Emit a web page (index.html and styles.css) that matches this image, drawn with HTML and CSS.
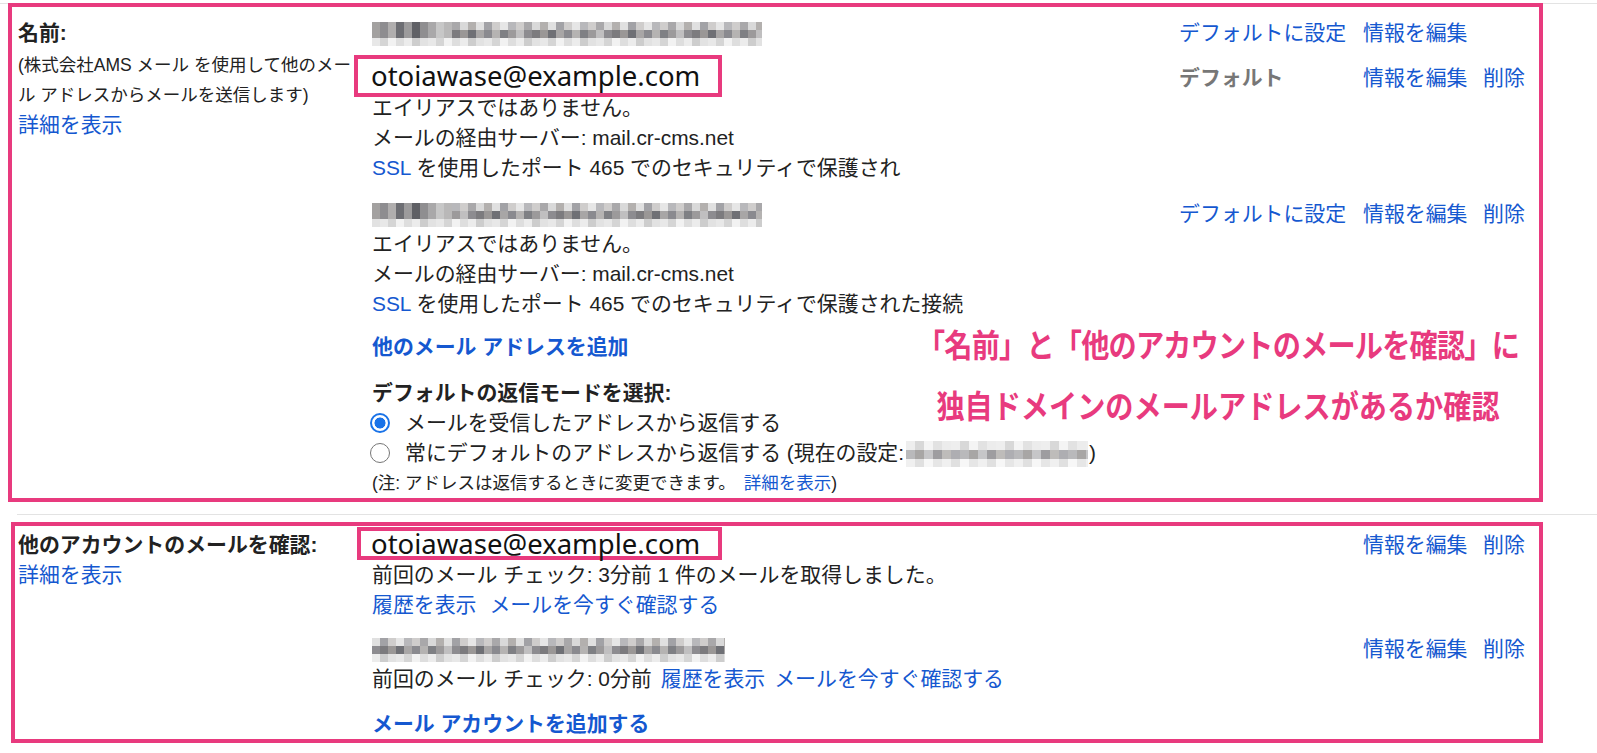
FILE: index.html
```html
<!DOCTYPE html>
<html lang="ja">
<head>
<meta charset="utf-8">
<title>アカウント設定</title>
<link rel="stylesheet" href="styles.css">
</head>
<body>
<div class="sep sep-top"></div>
<section class="box box-send">
  <div class="label-col">
    <div class="label">名前:</div>
    <div class="note">(株式会社AMS メール を使用して他のメール アドレスからメールを送信します)</div>
    <a class="link" href="#">詳細を表示</a>
  </div>
  <div class="main-col">
    <div class="entry">
      <div class="entry-body">
        <div class="line"><span class="mosaic m-addr"></span></div>
      </div>
      <div class="actions"><a href="#">デフォルトに設定</a><a href="#">情報を編集</a><span></span></div>
    </div>
    <div class="entry e2">
      <div class="entry-body">
        <div class="line addr-line"><div class="cover cover-send">otoiawase@example.com</div></div>
        <div class="line">エイリアスではありません。</div>
        <div class="line">メールの経由サーバー: mail.cr-cms.net</div>
        <div class="line clip"><a href="#">SSL</a> を使用したポート 465 でのセキュリティで保護された接続</div>
      </div>
      <div class="actions"><span class="is-default">デフォルト</span><a href="#">情報を編集</a><a href="#">削除</a></div>
    </div>
    <div class="entry e3">
      <div class="entry-body">
        <div class="line"><span class="mosaic m-addr m-alt"></span></div>
        <div class="line">エイリアスではありません。</div>
        <div class="line">メールの経由サーバー: mail.cr-cms.net</div>
        <div class="line"><a href="#">SSL</a> を使用したポート 465 でのセキュリティで保護された接続</div>
      </div>
      <div class="actions"><a href="#">デフォルトに設定</a><a href="#">情報を編集</a><a href="#">削除</a></div>
    </div>
    <div class="add-addr"><a class="strong-link" href="#">他のメール アドレスを追加</a></div>
    <div class="reply-mode">
      <div class="label">デフォルトの返信モードを選択:</div>
      <div class="radio-row"><span class="radio checked"></span><span>メールを受信したアドレスから返信する</span></div>
      <div class="radio-row"><span class="radio"></span><span>常にデフォルトのアドレスから返信する (現在の設定:<span class="mosaic m-current"></span>)</span></div>
      <div class="note-small">(注: アドレスは返信するときに変更できます。<a class="note-link" href="#">詳細を表示</a>)</div>
    </div>
  </div>
  <div class="annot">
    <div class="annot-l1">「名前」と「他のアカウントのメールを確認」に</div>
    <div class="annot-l2">独自ドメインのメールアドレスがあるか確認</div>
  </div>
</section>
<div class="sep sep-mid"></div>
<section class="box box-fetch">
  <div class="label-col">
    <div class="label">他のアカウントのメールを確認:</div>
    <a class="link" href="#">詳細を表示</a>
  </div>
  <div class="main-col">
    <div class="entry">
      <div class="entry-body">
        <div class="line addr-line"><div class="cover cover-fetch">otoiawase@example.com</div></div>
        <div class="line">前回のメール チェック: 3分前 1 件のメールを取得しました。</div>
        <div class="line"><a href="#">履歴を表示</a><a class="gap" href="#">メールを今すぐ確認する</a></div>
      </div>
      <div class="actions"><span></span><a href="#">情報を編集</a><a href="#">削除</a></div>
    </div>
    <div class="entry f2">
      <div class="entry-body">
        <div class="line"><span class="mosaic m-fetch"></span></div>
        <div class="line">前回のメール チェック: 0分前<a class="gap-sm" href="#">履歴を表示</a><a class="gap-sm" href="#">メールを今すぐ確認する</a></div>
      </div>
      <div class="actions"><span></span><a href="#">情報を編集</a><a href="#">削除</a></div>
    </div>
    <div class="add-acct"><a class="strong-link" href="#">メール アカウントを追加する</a></div>
  </div>
</section>
</body>
</html>
```

FILE: styles.css
```css
* { box-sizing: border-box; }

body {
  margin: 0;
  background: #fff;
  color: #222;
  font-family: "Liberation Sans", "Noto Sans CJK JP", sans-serif;
  font-size: 20.9px;
  line-height: 30px;
}

a { color: #1558d0; text-decoration: none; }

.sep { height: 1px; background: #e3e3e3; }
.sep-top { margin-top: 3px; }
.sep-mid { margin: 12px 0 0 17px; }

.box {
  position: relative;
  background: #fff;
  border: 4px solid #e83a7e;
  display: grid;
  grid-template-columns: 354px 1fr;
  align-items: start;
}

.box-send {
  margin: -1px 0 0 8px;
  width: 1535px;
  padding: 11px 14px 0 6px;
}

.box-fetch {
  margin: 7px 0 0 11px;
  width: 1532px;
  padding: 4px 14px 0 3px;
  height: 221px;
}

.label { font-weight: 700; }

.note {
  width: 342px;
  margin-top: 2px;
  font-size: 17.5px;
  line-height: 30px;
}

.link { display: inline-block; }

.main-col { min-width: 0; }

.entry { display: flex; align-items: flex-start; }
.entry-body { flex: 1; min-width: 0; }
.e2 { margin-top: 15px; }
.e3 { margin-top: 16px; }
.f2 { margin-top: 14px; }

.line { height: 30px; white-space: nowrap; }
.addr-line { position: relative; }
.clip { width: 529px; overflow: hidden; }

.actions {
  display: grid;
  grid-template-columns: 184px 120px 42px;
  white-space: nowrap;
}

.is-default { color: #777; font-weight: 700; }

.gap { margin-left: 13px; }
.gap-sm { margin-left: 9px; }
.note-link { margin-left: 8px; }

.strong-link { font-weight: 700; }
.add-addr { margin-top: 13px; }
.reply-mode { margin-top: 16px; }
.add-acct { margin-top: 15px; }

.radio-row { display: flex; align-items: center; height: 30px; white-space: nowrap; }
.radio {
  width: 20px;
  height: 20px;
  flex: none;
  margin: 0 15px 0 -2px;
  border-radius: 50%;
  border: 1.5px solid #767676;
  background: #fff;
}
.radio.checked {
  border: 2.5px solid #1a73e8;
  background: radial-gradient(circle, #1a73e8 0 5.2px, #fff 5.8px);
}

.note-small { font-size: 17.5px; line-height: 30px; white-space: nowrap; }

/* pixelated (blurred) addresses */
.mosaic {
  display: inline-block;
  vertical-align: middle;
  height: 24px;
  background:
    linear-gradient(90deg, #cfcdcc 0 8px, #a9a8aa 8px 16px, #d9d9d9 16px 24px, #b3b0ae 24px 32px, #e0e0e0 32px 40px, #a2a2a6 40px 48px, #cfcdcc 48px 56px, #e6e6e6 56px 64px, #b8b8bb 64px 72px) 0 0 / 72px 8px repeat-x,
    linear-gradient(90deg, #7c7b7e 0 8px, #9a9796 8px 16px, #6f7075 16px 24px, #a8a6a6 24px 32px, #8a8a8f 32px 40px, #b5b3b2 40px 48px, #7f8084 48px 56px, #9c9a9b 56px 64px, #c0bfc0 64px 72px, #8d8c90 72px 80px) 0 8px / 80px 8px repeat-x,
    linear-gradient(90deg, #e8e8e8 0 8px, #d5d5d5 8px 16px, #f2f2f2 16px 24px, #dedede 24px 32px, #ececec 32px 40px, #cdcdcd 40px 48px, #e2e2e2 48px 56px) 0 16px / 56px 8px repeat-x;
}
.m-addr {
  width: 390px;
  background:
    linear-gradient(90deg, #a3a1a0 0 8px, #8e8d90 8px 16px, #b0aeae 16px 24px, #6d6e73 24px 32px, #9c9b9c 32px 40px, #5f6065 40px 48px, #8f8e90 48px 56px, #a9a8a9 56px 64px, #c7c7c7 64px 72px, #b9b8b8 72px 80px) 0 0 / 80px 16px no-repeat,
    linear-gradient(90deg, #cfcdcc 0 8px, #a9a8aa 8px 16px, #d9d9d9 16px 24px, #b3b0ae 24px 32px, #e0e0e0 32px 40px, #a2a2a6 40px 48px, #cfcdcc 48px 56px, #e6e6e6 56px 64px, #b8b8bb 64px 72px) 0 0 / 72px 8px repeat-x,
    linear-gradient(90deg, #7c7b7e 0 8px, #9a9796 8px 16px, #6f7075 16px 24px, #a8a6a6 24px 32px, #8a8a8f 32px 40px, #b5b3b2 40px 48px, #7f8084 48px 56px, #9c9a9b 56px 64px, #c0bfc0 64px 72px, #8d8c90 72px 80px) 0 8px / 80px 8px repeat-x,
    linear-gradient(90deg, #e8e8e8 0 8px, #d5d5d5 8px 16px, #f2f2f2 16px 24px, #dedede 24px 32px, #ececec 32px 40px, #cdcdcd 40px 48px, #e2e2e2 48px 56px) 0 16px / 56px 8px repeat-x;
}
.m-alt { background-position: 0 0, 16px 0, 24px 8px, 8px 16px; }
.m-fetch { width: 353px; background-position: 40px 0, 8px 8px, 24px 16px; }
.m-current {
  width: 182px;
  height: 26px;
  margin: 0 1px 0 2px;
  background:
    linear-gradient(90deg, #eeeeee 0 9px, #d8d8d8 9px 18px, #f4f4f4 18px 27px, #e2e2e2 27px 36px, #ececec 36px 45px) 0 0 / 45px 9px repeat-x,
    linear-gradient(90deg, #b9b9bb 0 9px, #a8a6a5 9px 18px, #c6c6c8 18px 27px, #9e9da0 27px 36px, #bebcba 36px 45px, #aeaeb2 45px 54px) 0 9px / 54px 9px repeat-x,
    linear-gradient(90deg, #f0f0f0 0 9px, #e0e0e0 9px 18px, #f7f7f7 18px 27px, #e6e6e6 27px 36px) 0 18px / 36px 8px repeat-x;
}

/* annotation overlays */
.cover {
  position: absolute;
  background: #fff;
  border: 4px solid #e83a7e;
  color: #111;
  font-family: "Noto Sans", sans-serif;
  font-size: 27.5px;
  white-space: nowrap;
}
.cover-send {
  left: -18px;
  top: -8px;
  width: 368px;
  height: 42px;
  line-height: 34px;
  padding-left: 13px;
}
.cover-fetch {
  left: -15px;
  top: -3px;
  width: 365px;
  height: 33px;
  line-height: 25px;
  padding-left: 10px;
}

.annot {
  position: absolute;
  left: 826px;
  top: 306px;
  width: 760px;
  text-align: center;
  color: #e83a7e;
  font-family: "Noto Sans CJK JP", sans-serif;
  font-weight: 700;
  font-size: 32px;
  line-height: 60.5px;
  white-space: nowrap;
  transform: scaleX(0.88);
}
.annot-l1 { letter-spacing: -0.9px; }
```
